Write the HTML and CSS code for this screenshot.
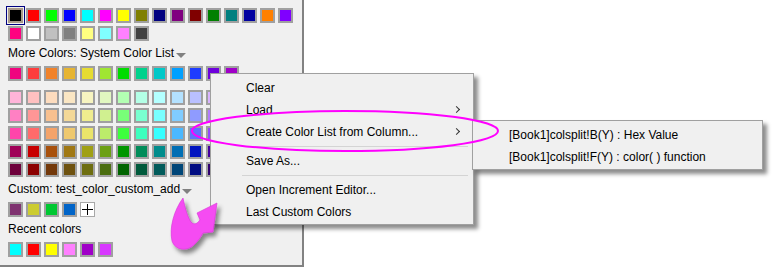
FILE: index.html
```html
<!DOCTYPE html>
<html>
<head>
	<link rel="stylesheet" href="styles.css">
</head>
<body>
	<div class="panel">
		<div class="row" id="basic1"></div>
		<div class="row" id="basic2"></div>
		<div class="label">More Colors: System Color List<span class="drop"></span></div>
		<div class="row" id="system"></div>
		<div class="grid" id="shades"></div>
		<div class="label">Custom: test_color_custom_add<span class="drop"></span></div>
		<div class="row" id="custom"><div class="swatch plus"></div></div>
		<div class="label">Recent colors</div>
		<div class="row" id="recent"></div>
	</div>

	<div class="menu main">
		<div class="item">Clear</div>
		<div class="item sub">Load</div>
		<div class="item sub">Create Color List from Column...</div>
		<div class="sep"></div>
		<div class="item">Save As...</div>
		<div class="sep"></div>
		<div class="item">Open Increment Editor...</div>
		<div class="item">Last Custom Colors</div>
	</div>

	<div class="menu side">
		<div class="item">[Book1]colsplit!B(Y) : Hex Value</div>
		<div class="item">[Book1]colsplit!F(Y) : color( ) function</div>
	</div>

	<svg class="marks" width="774" height="267">
		<defs>
			<filter id="shade" x="-30%" y="-30%" width="160%" height="160%">
				<feDropShadow dx="3" dy="4" stdDeviation="2" flood-color="#000" flood-opacity="0.45"/>
			</filter>
		</defs>
		<ellipse cx="345" cy="131" rx="153" ry="20" fill="none" stroke="#ff00ff" stroke-width="2"/>
		<path filter="url(#shade)" fill="#f54cf2" stroke="#d930d6" stroke-width="0.6"
			d="M183,198 C174,210 169,228 172,241 C175,250 186,252 194,245 C198,241 201,237 203,233 L213,232 L217,203 L197,213 L200,220 C197,224 194,225 191,222 C187,216 185,207 183,198 Z"/>
	</svg>

	<script type="text/javascript">
		function fill(id, colors, first) {
			var box = document.getElementById(id);
			colors.forEach(function(c, i) {
				var s = document.createElement("div");
				s.className = "swatch" + (first && i == 0 ? " picked" : "");
				s.style.background = c;
				box.insertBefore(s, box.querySelector(".plus"));
			});
		}
		fill("basic1", ["#000000","#ff0000","#00ff00","#0000ff","#00ffff","#ff00ff","#ffff00","#808000","#000080","#800080","#800000","#008000","#008080","#0000a0","#ff8000","#8000ff"], true);
		fill("basic2", ["#ff0080","#ffffff","#c0c0c0","#808080","#ffff80","#80ffff","#ff80ff","#404040"]);
		fill("system", ["#f0047f","#fd3c3c","#f0822a","#e6b432","#e6dc32","#a0e632","#00dc00","#00d28c","#00c8c8","#00a0ff","#1e3cff","#6e00dc","#a000c8"]);
		fill("shades", [
			"#ffb4d9","#ffc0c0","#fddcbe","#fae6c3","#f7f4c0","#e1f7c0","#b3ffb3","#b3ffe6","#b3ffff","#b3e1ff","#b9c0ff","#d9b3ff",
			"#ff80c3","#ff9696","#f8c08f","#f3d897","#efec8e","#d0f090","#78ff78","#78ffd0","#78ffff","#80ccff","#8f9bff","#b37aff",
			"#ff45aa","#ff6b6b","#f4a36a","#eec86e","#eae46a","#bcec6a","#3cff3c","#3cffbe","#36ffff","#4bb8ff","#6070ff","#9448ff",
			"#a00058","#c80000","#a8500c","#a07814","#a0a014","#6ca014","#009600","#008c5a","#008c8c","#006eb4","#0014c0","#4600a0",
			"#6e003c","#8c0000","#73380a","#6e5210","#6e6e10","#4b6e10","#006400","#005a3c","#005a5a","#004678","#000c82","#300070"]);
		fill("custom", ["#7f3270","#cccc30","#00c832","#0064c8"]);
		fill("recent", ["#00ffff","#ff0000","#ffff00","#ff80ff","#a000c8","#d838ff"]);
	</script>
</body>
</html>
```

FILE: styles.css
```css
body {margin:0;background:#fff;font-family:"Liberation Sans",Arial,sans-serif;font-size:12px;color:#000;}
.panel {width:294px;height:257px;padding:8px 0 0 8px;background:#f0f0f0;border-top:1px solid #fff;border-right:2px solid #828282;border-bottom:2px solid #828282;box-sizing:content-box;margin-top:-1px;}
.row {display:flex;gap:3px;margin-bottom:3px;}
.row:last-child {margin-bottom:0;}
.grid {display:grid;grid-template-columns:repeat(12,15px);gap:3px;margin-top:9px;}
.swatch {width:15px;height:15px;box-sizing:border-box;border:2px solid #a0a0a0;}
.picked {border-color:#a89a8a;outline:1px solid #000080;outline-offset:1px;}
.plus {background:#fff;border:1px solid #a8a8a8;position:relative;}
.plus::before {content:"";position:absolute;left:1px;right:1px;top:6px;border-top:1px solid #000;}
.plus::after {content:"";position:absolute;top:1px;bottom:1px;left:6px;border-left:1px solid #000;}
.label {height:25px;line-height:25px;margin-top:-3px;white-space:nowrap;}
.grid + .label {margin-top:0;}
.drop {display:inline-block;width:0;height:0;border-left:5px solid transparent;border-right:5px solid transparent;border-top:5px solid #808080;margin-left:2px;vertical-align:-1px;}

.menu {position:absolute;background:#f0f0f0;border:1px solid #a0a0a0;box-shadow:4px 4px 4px rgba(0,0,0,0.45);box-sizing:border-box;padding:3px 0 1px;}
.main {left:210px;top:73px;width:264px;height:152px;}
.side {left:472px;top:120px;width:291px;height:50px;}
.item {height:22px;line-height:22px;padding-left:35px;position:relative;white-space:nowrap;}
.side .item {padding-left:36px;}
.sub::after {content:"";position:absolute;right:14px;top:8px;width:4px;height:4px;border-top:1px solid #333;border-right:1px solid #333;transform:rotate(45deg);}
.sep {height:7px;margin:0 5px 0 31px;position:relative;}
.sep::before {content:"";position:absolute;left:0;right:0;top:3px;border-top:1px solid #d4d4d4;}

.marks {position:absolute;left:0;top:0;pointer-events:none;}
```
